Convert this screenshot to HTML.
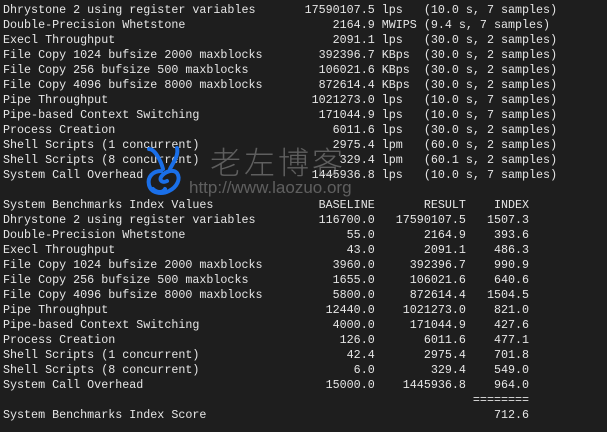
<!DOCTYPE html>
<html><head><meta charset="utf-8"><style>
html,body{margin:0;padding:0;background:#1e1e1e;width:607px;height:432px;overflow:hidden;position:relative}
pre{margin:0;position:absolute;left:3px;top:3px;font-family:"Liberation Mono",monospace;font-size:11.7px;line-height:15px;color:#e6e6e6}
.wm1{position:absolute;left:210px;top:138px;font-family:"Noto Sans CJK SC",sans-serif;font-size:31px;color:rgba(150,150,150,0.55);letter-spacing:3px;font-weight:300}
.wm2{position:absolute;left:189px;top:178px;font-family:"Liberation Sans",sans-serif;font-size:17px;color:rgba(150,150,150,0.55)}
svg{position:absolute;left:143px;top:145px}
</style></head><body>
<pre>Dhrystone 2 using register variables       17590107.5 lps   (10.0 s, 7 samples)
Double-Precision Whetstone                     2164.9 MWIPS (9.4 s, 7 samples)
Execl Throughput                               2091.1 lps   (30.0 s, 2 samples)
File Copy 1024 bufsize 2000 maxblocks        392396.7 KBps  (30.0 s, 2 samples)
File Copy 256 bufsize 500 maxblocks          106021.6 KBps  (30.0 s, 2 samples)
File Copy 4096 bufsize 8000 maxblocks        872614.4 KBps  (30.0 s, 2 samples)
Pipe Throughput                             1021273.0 lps   (10.0 s, 7 samples)
Pipe-based Context Switching                 171044.9 lps   (10.0 s, 7 samples)
Process Creation                               6011.6 lps   (30.0 s, 2 samples)
Shell Scripts (1 concurrent)                   2975.4 lpm   (60.0 s, 2 samples)
Shell Scripts (8 concurrent)                    329.4 lpm   (60.1 s, 2 samples)
System Call Overhead                        1445936.8 lps   (10.0 s, 7 samples)

System Benchmarks Index Values               BASELINE       RESULT    INDEX
Dhrystone 2 using register variables         116700.0   17590107.5   1507.3
Double-Precision Whetstone                       55.0       2164.9    393.6
Execl Throughput                                 43.0       2091.1    486.3
File Copy 1024 bufsize 2000 maxblocks          3960.0     392396.7    990.9
File Copy 256 bufsize 500 maxblocks            1655.0     106021.6    640.6
File Copy 4096 bufsize 8000 maxblocks          5800.0     872614.4   1504.5
Pipe Throughput                               12440.0    1021273.0    821.0
Pipe-based Context Switching                   4000.0     171044.9    427.6
Process Creation                                126.0       6011.6    477.1
Shell Scripts (1 concurrent)                     42.4       2975.4    701.8
Shell Scripts (8 concurrent)                      6.0        329.4    549.0
System Call Overhead                          15000.0    1445936.8    964.0
                                                                   ========
System Benchmarks Index Score                                         712.6</pre>
<div class="wm1">老左博客</div>
<div class="wm2">http://www.laozuo.org</div>
<svg width="46" height="54" viewBox="0 0 46 54" fill="none" stroke="#1a6fe8" stroke-width="4" stroke-linecap="round" stroke-linejoin="round">
<path d="M6 4 C12 4 18 16 20 24 M34 3 C36 10 30 18 27 24 M18 26 C10 26 4 32 6 40 C8 48 18 50 26 46 C34 42 38 34 34 28 C30 24 22 26 18 32 C16 36 20 38 24 36 M10 44 C14 48 20 48 22 44"/>
</svg>
</body></html>
